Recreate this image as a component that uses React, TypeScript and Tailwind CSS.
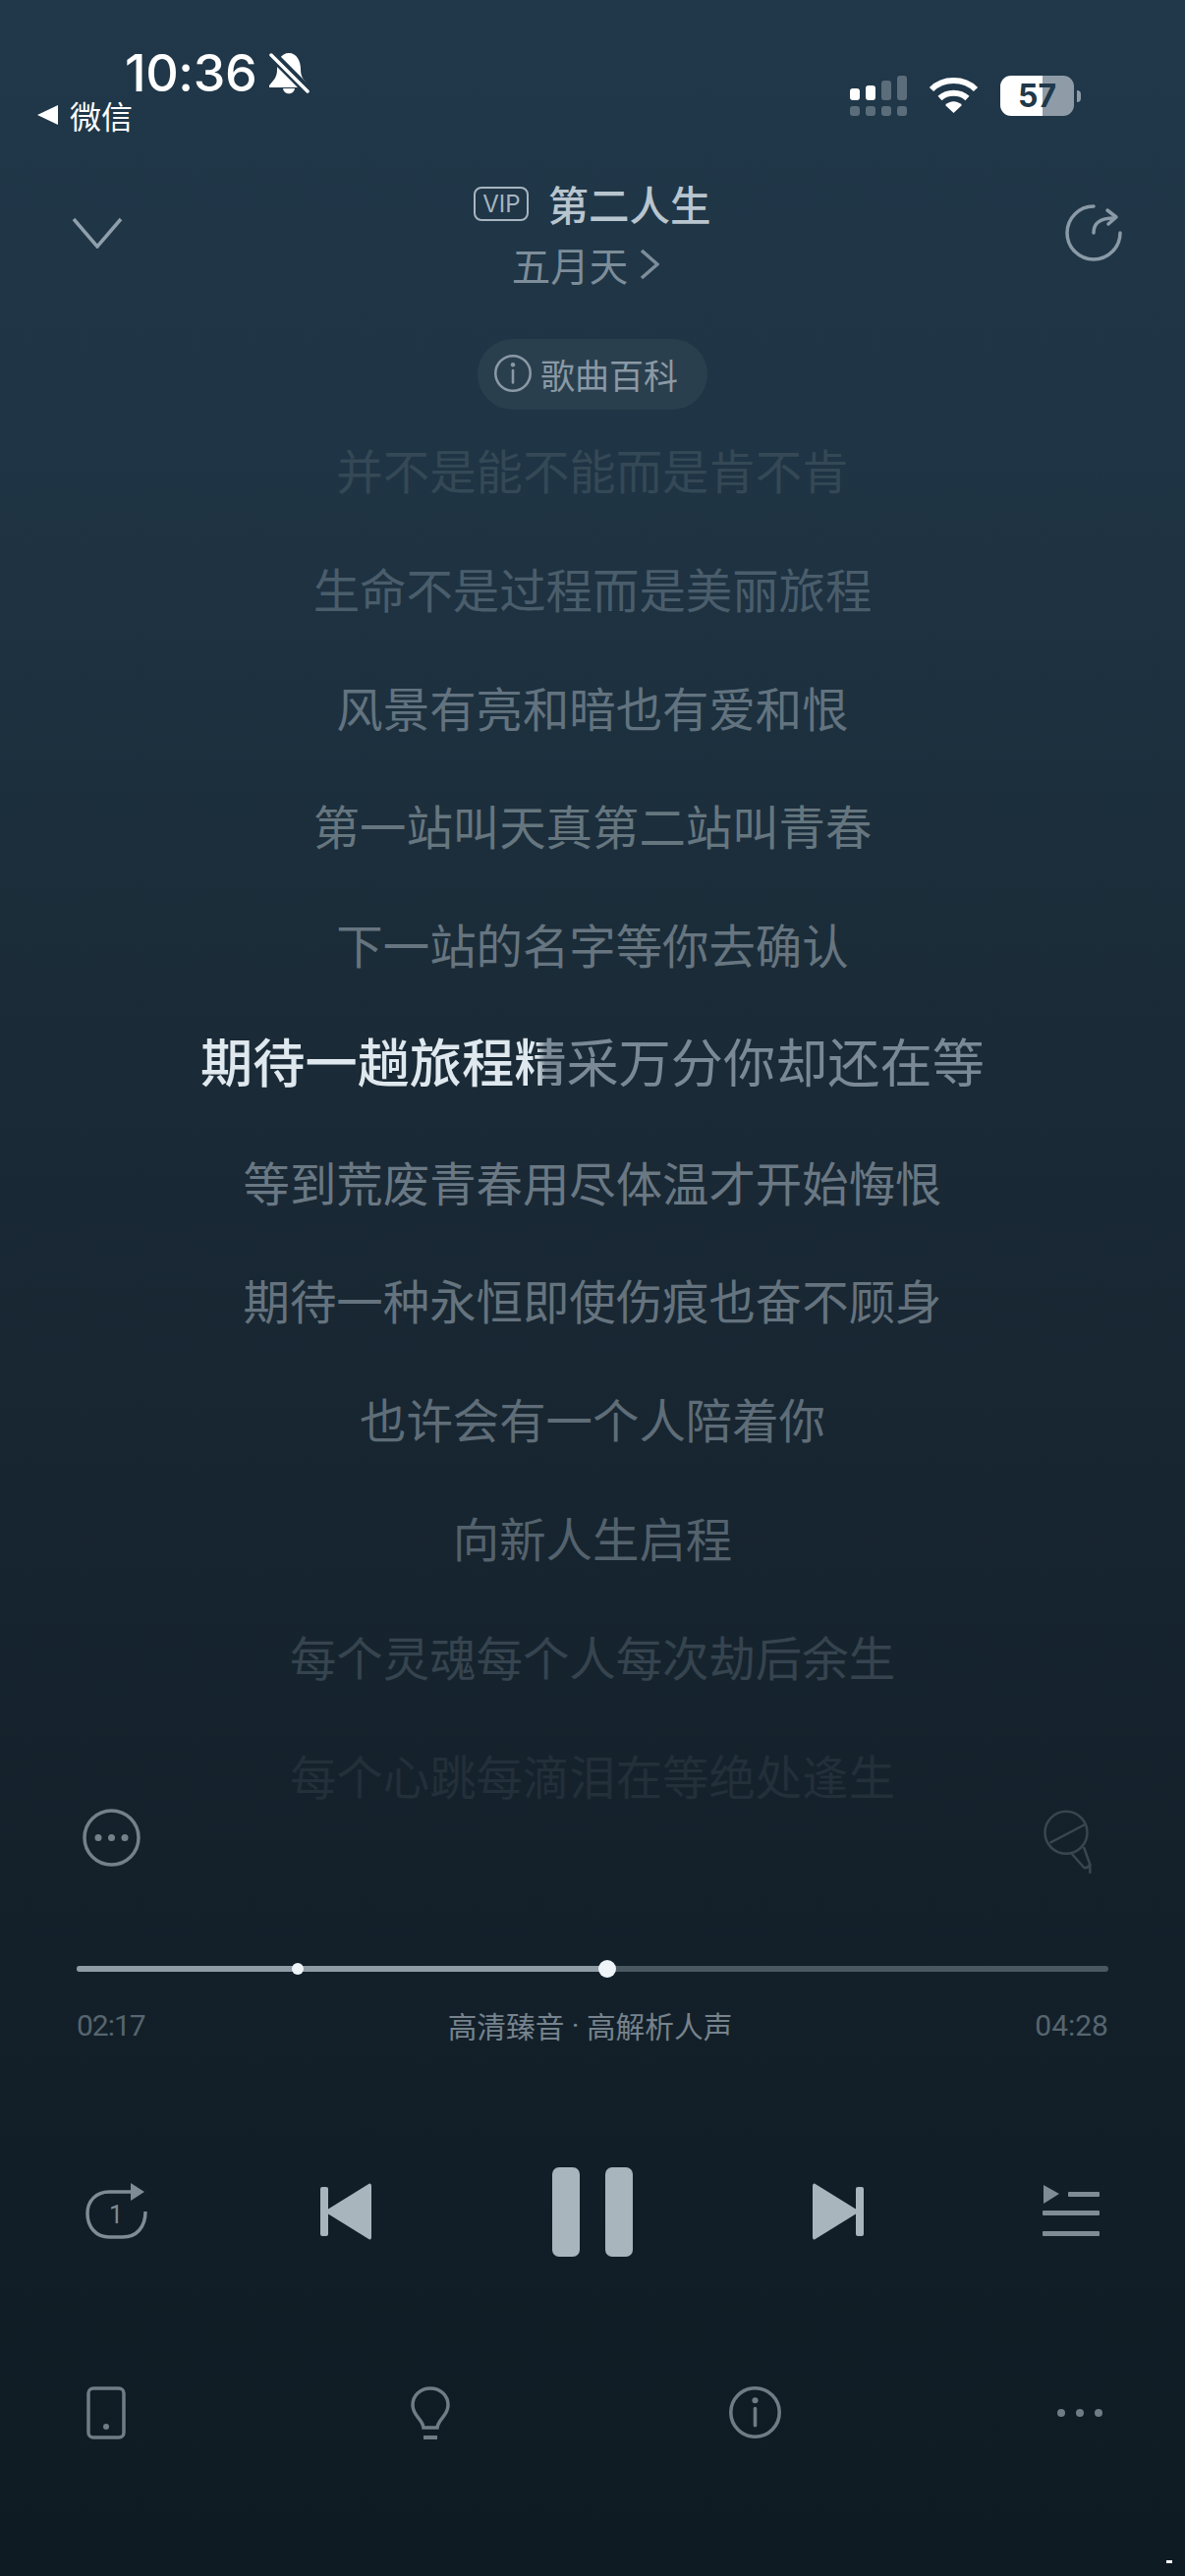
const cjk = "font-['Noto_Sans_CJK_SC','Noto_Sans',sans-serif]";

const lyrics = [
  { text: "并不是能不能而是肯不肯", color: "text-[#344856]" },
  { text: "生命不是过程而是美丽旅程", color: "text-[#4a5d6b]" },
  { text: "风景有亮和暗也有爱和恨", color: "text-[#62737f]" },
  { text: "第一站叫天真第二站叫青春", color: "text-[#66767f]" },
  { text: "下一站的名字等你去确认", color: "text-[#66757f]" },
  null,
  { text: "等到荒废青春用尽体温才开始悔恨", color: "text-[#6a7884]" },
  { text: "期待一种永恒即使伤痕也奋不顾身", color: "text-[#65737e]" },
  { text: "也许会有一个人陪着你", color: "text-[#5f6d78]" },
  { text: "向新人生启程", color: "text-[#54626d]" },
  { text: "每个灵魂每个人每次劫后余生", color: "text-[#36444f]" },
  { text: "每个心跳每滴泪在等绝处逢生", color: "text-[#232f39]" },
];

function BellOff() {
  return (
    <svg width="42" height="44" viewBox="0 0 42 44" fill="none">
      <path d="M21 1C13 1 9 9 9 18C9 26 5 29 1 34V36H41V34C37 29 33 26 33 18C33 9 29 1 21 1Z" fill="#fff" />
      <path d="M15 37H27C26 44 16 44 15 37Z" fill="#fff" />
      <path d="M3 2L40 39" stroke="#20384a" strokeWidth="10" />
      <path d="M3 3L40 40" stroke="#fff" strokeWidth="3.5" strokeLinecap="round" />
    </svg>
  );
}

function Signal() {
  return (
    <div className="flex flex-col gap-[6px]">
      <div className="flex items-end gap-[6px]">
        <div className="w-[10px] h-[12px] rounded-[3px] bg-white" />
        <div className="w-[10px] h-[15px] rounded-[3px] bg-white" />
        <div className="w-[10px] h-[20px] rounded-[3px] bg-[#5b6d7a]" />
        <div className="w-[10px] h-[25px] rounded-[3px] bg-[#5b6d7a]" />
      </div>
      <div className="flex gap-[6px]">
        <div className="w-[10px] h-[10px] rounded-[3px] bg-[#5b6d7a]" />
        <div className="w-[10px] h-[10px] rounded-[3px] bg-[#5b6d7a]" />
        <div className="w-[10px] h-[10px] rounded-[3px] bg-[#5b6d7a]" />
        <div className="w-[10px] h-[10px] rounded-[3px] bg-[#5b6d7a]" />
      </div>
    </div>
  );
}

function Wifi() {
  return (
    <svg width="51" height="38" viewBox="0 0 51 38" fill="none">
      <path d="M3 14C15 2 36 2 48 14" stroke="#fff" strokeWidth="6" />
      <path d="M11.5 23C19 16 32 16 39.5 23" stroke="#fff" strokeWidth="6" />
      <path d="M17 30L25.5 38L34 30C29 25 22 25 17 30Z" fill="#fff" />
    </svg>
  );
}

function Battery() {
  return (
    <div className="flex items-center gap-[3px]">
      <div className="relative flex w-[75px] h-[41px] overflow-hidden rounded-[11px]">
        <div className="w-[43px] bg-white" />
        <div className="flex-1 bg-[#8f9ca7]" />
        <span className="absolute inset-0 flex items-center justify-center font-['Inter',sans-serif] text-[32px] font-bold text-[#20384a]">57</span>
      </div>
      <div className="w-[4px] h-[12px] rounded-r-full bg-[#8f9ca7]" />
    </div>
  );
}

function ChevronDown() {
  return (
    <svg width="52" height="32" viewBox="0 0 52 32" fill="none">
      <path d="M2 2L26 30L50 2" stroke="#8f9fab" strokeWidth="3.5" />
    </svg>
  );
}

function ShareCircle() {
  return (
    <svg width="58" height="58" viewBox="0 0 58 58" fill="none" stroke="#8a9aa6" strokeWidth="3.5" strokeLinecap="round" strokeLinejoin="round">
      <path d="M29 2A27 27 0 1 0 56 29" />
      <path d="M29 29C29 19 35 14 50 14" />
      <path d="M43 6L52 13L44 20" />
    </svg>
  );
}

function InfoIcon({ size, color, stroke }: { size: number; color: string; stroke: number }) {
  return (
    <svg width={size} height={size} viewBox="0 0 52 52" fill="none">
      <circle cx="26" cy="26" r={26 - stroke / 2} stroke={color} strokeWidth={stroke} />
      <circle cx="26" cy="14" r="3" fill={color} />
      <path d="M26 22V39" stroke={color} strokeWidth={stroke} strokeLinecap="round" />
    </svg>
  );
}

function MoreCircle() {
  return (
    <svg width="59" height="59" viewBox="0 0 59 59" fill="none">
      <circle cx="29.5" cy="29.5" r="27.5" stroke="#73818b" strokeWidth="3.5" />
      <circle cx="16" cy="29.5" r="3.5" fill="#73818b" />
      <circle cx="29.5" cy="29.5" r="3.5" fill="#73818b" />
      <circle cx="43" cy="29.5" r="3.5" fill="#73818b" />
    </svg>
  );
}

function MicOff() {
  return (
    <svg width="52" height="66" viewBox="0 0 52 66" fill="none" stroke="#39464f" strokeWidth="2.5" strokeLinecap="round" strokeLinejoin="round">
      <circle cx="25" cy="24.3" r="21.5" />
      <path d="M9.3 34.3L44.3 16" />
      <path d="M30 45L43.3 60Q47 61 49.3 56.7L43.3 40" />
      <path d="M49.3 57V65" />
    </svg>
  );
}

function RepeatOne() {
  return (
    <svg width="64" height="58" viewBox="0 0 64 58" fill="none">
      <path d="M50 9H24C11 9 2 18 2 31C2 45 11 55 24 55H38C52 55 61 45 61 29" stroke="#7f8c95" strokeWidth="3.5" />
      <path d="M46 0L60 9L46 18Z" fill="#7f8c95" />
      <text x="31" y="41" textAnchor="middle" fill="#7f8c95" fontFamily="Roboto" fontSize="25">1</text>
    </svg>
  );
}

function Prev() {
  return (
    <svg width="53" height="58" viewBox="0 0 53 58" fill="#a8b5bd">
      <rect x="0" y="4" width="8" height="50" rx="2" />
      <path d="M4 29L50 0.5Q52 0 52 3V55Q52 58 50 57.5Z" />
    </svg>
  );
}

function Next() {
  return (
    <svg width="53" height="58" viewBox="0 0 53 58" fill="#a8b5bd">
      <rect x="45" y="4" width="8" height="50" rx="2" />
      <path d="M49 29L3 0.5Q1 0 1 3V55Q1 58 3 57.5Z" />
    </svg>
  );
}

function QueueIcon() {
  return (
    <svg width="58" height="54" viewBox="0 0 58 54" fill="#7f8c95">
      <path d="M1 0L17 9L1 19Z" />
      <rect x="26" y="7" width="32" height="5" rx="1" />
      <rect x="0" y="26" width="58" height="5" rx="1" />
      <rect x="0" y="47" width="58" height="5" rx="1" />
    </svg>
  );
}

function PhoneIcon() {
  return (
    <svg width="40" height="54" viewBox="0 0 40 54" fill="none">
      <rect x="2" y="2" width="36" height="50" rx="5" stroke="#6f7c85" strokeWidth="3.5" />
      <circle cx="20" cy="41" r="3" fill="#6f7c85" />
    </svg>
  );
}

function BulbIcon() {
  return (
    <svg width="40" height="54" viewBox="0 0 40 54" fill="none" stroke="#6f7c85" strokeWidth="3.5">
      <path d="M13 42C12 33 2 30 2 19C2 9 10 2 20 2C30 2 38 9 38 19C38 30 28 33 27 42Z" />
      <path d="M13 52H27" strokeWidth="4" />
    </svg>
  );
}

export default function App() {
  return (
    <div className={`relative flex h-[2622px] w-[1206px] flex-col overflow-hidden bg-[linear-gradient(180deg,#20384a_0%,#1f3444_18%,#1a2a36_42%,#14212b_72%,#0e1b23_100%)] ${cjk}`}>
      {/* status bar */}
      <div className="flex h-[170px] justify-between pt-[53px]">
        <div className="flex flex-col">
          <div className="flex h-[44px] items-center gap-[12px] pl-[127px]">
            <span className="font-['Inter',sans-serif] text-[52px] font-medium leading-none tracking-[-0.4px] text-white">10:36</span>
            <BellOff />
          </div>
          <div className="mt-[2px] flex h-[36px] items-center gap-[12px] pl-[38px]">
            <div className="h-0 w-0 border-y-[10px] border-r-[21px] border-y-transparent border-r-white" />
            <span className="text-[32px] leading-none text-white">微信</span>
          </div>
        </div>
        <div className="flex h-[44px] items-start gap-[22px] pr-[106px] pt-[24px]">
          <Signal />
          <Wifi />
          <Battery />
        </div>
      </div>

      {/* song header */}
      <div className="flex h-[134px] items-center justify-between pl-[73px] pr-[64px]">
        <ChevronDown />
        <div className="mr-[3px] flex flex-col items-center">
          <div className="flex h-[40px] items-center gap-[19px]">
            <span className="flex h-[35px] w-[56px] items-center justify-center rounded-[8px] border-2 border-[#a7b5bf] font-['Inter',sans-serif] text-[24px] leading-none text-[#a7b5bf]">VIP</span>
            <span className="text-[41.5px] font-medium leading-none text-[#b8c5ce]">第二人生</span>
          </div>
          <div className="mr-[14px] mt-[23px] flex h-[36px] items-center gap-[12px]">
            <span className="text-[39.5px] leading-none text-[#7d8d99]">五月天</span>
            <svg width="20" height="32" viewBox="0 0 20 32" fill="none">
              <path d="M2 2L18 16L2 30" stroke="#7d8d99" strokeWidth="3.5" />
            </svg>
          </div>
        </div>
        <ShareCircle />
      </div>

      {/* wiki pill */}
      <div className="flex justify-center pt-[41px]">
        <div className="flex h-[72px] w-[234px] items-center gap-[9px] rounded-[36px] bg-[#2a3f4e] pb-[2px] pl-[17px]">
          <InfoIcon size={38} color="#8a99a5" stroke={3.5} />
          <span className="text-[35px] leading-none text-[#8a99a5]">歌曲百科</span>
        </div>
      </div>

      {/* lyrics */}
      <div className="mt-[37px] flex flex-col gap-[73.4px]">
        {lyrics.map((line, i) =>
          line ? (
            <div key={i} className={`flex h-[47.4px] items-center justify-center text-[47.4px] leading-none ${line.color}`}>
              {line.text}
            </div>
          ) : (
            <div key={i} className="flex h-[47.4px] items-center justify-center pb-[6px] text-[53.2px] leading-none text-[#7a8995]">
              <span className="font-medium text-[#dfe8ee]">期待一趟旅程</span>
              <span className="bg-[linear-gradient(90deg,#dfe8ee_45%,#7a8995_60%)] bg-clip-text font-medium text-transparent">精</span>
              <span>采万分你却还在等</span>
            </div>
          ),
        )}
      </div>

      {/* actions above the progress bar */}
      <div className="mt-[10.8px] flex h-[64px] items-start justify-between pl-[84px] pr-[94px]">
        <MoreCircle />
        <MicOff />
      </div>

      {/* progress */}
      <div className="relative mx-[78px] mt-[96px] flex h-[6px] rounded-full bg-[#4a5862]">
        <div className="h-full w-[540px] rounded-full bg-[#8f9ca6]" />
        <div className="absolute left-[219px] top-[-3px] h-[12px] w-[12px] rounded-full bg-[#eef4f8]" />
        <div className="absolute left-[531px] top-[-6px] h-[18px] w-[18px] rounded-full bg-[#eef4f8]" />
      </div>
      <div className="mx-[78px] mt-[39px] flex h-[32px] items-center justify-between">
        <span className="font-['Roboto',sans-serif] text-[30px] leading-none tracking-[-1px] text-[#56656f]">02:17</span>
        <span className="flex items-center text-[29.7px] leading-none text-[#76838d]">
          高清臻音<span className="font-['Roboto',sans-serif] whitespace-pre"> · </span>高解析人声
        </span>
        <span className="font-['Roboto',sans-serif] text-[30px] leading-none text-[#56656f]">04:28</span>
      </div>

      {/* transport */}
      <div className="mt-[128px] flex h-[91px] items-center pl-[87px]">
        <RepeatOne />
        <div className="ml-[175px]">
          <Prev />
        </div>
        <div className="ml-[183px] flex gap-[26px]">
          <div className="h-[91px] w-[28px] rounded-[7px] bg-[#a8b5bd]" />
          <div className="h-[91px] w-[28px] rounded-[7px] bg-[#a8b5bd]" />
        </div>
        <div className="ml-[182px]">
          <Next />
        </div>
        <div className="ml-[182px]">
          <QueueIcon />
        </div>
      </div>

      {/* bottom tools */}
      <div className="mt-[132px] flex h-[54px] items-center pl-[88px]">
        <PhoneIcon />
        <div className="ml-[290px]">
          <BulbIcon />
        </div>
        <div className="ml-[284px]">
          <InfoIcon size={53} color="#6f7c85" stroke={3.5} />
        </div>
        <div className="ml-[281px] flex gap-[11px]">
          <div className="h-[8px] w-[8px] rounded-full bg-[#6f7c85]" />
          <div className="h-[8px] w-[8px] rounded-full bg-[#6f7c85]" />
          <div className="h-[8px] w-[8px] rounded-full bg-[#6f7c85]" />
        </div>
      </div>

      <div className="absolute left-[1187px] top-[2606px] h-[3px] w-[6px] bg-white" />
    </div>
  );
}
